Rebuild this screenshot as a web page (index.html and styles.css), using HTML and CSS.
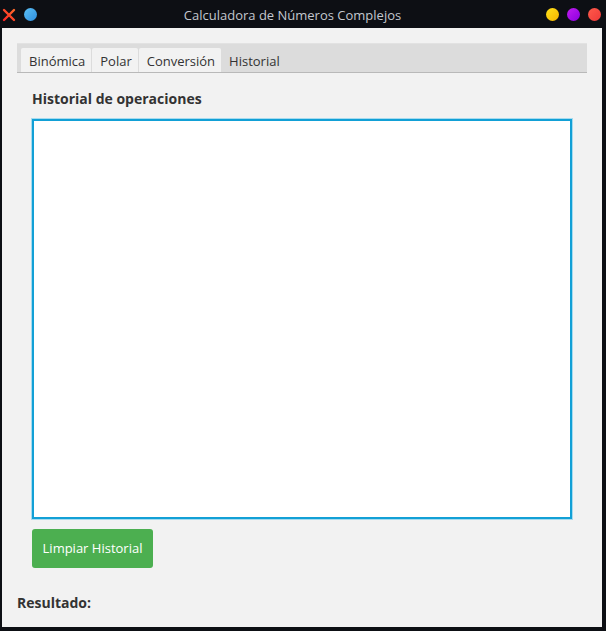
FILE: index.html
```html
<!DOCTYPE html>
<html lang="es">
<head>
<meta charset="utf-8">
<title>Calculadora de Números Complejos</title>
<link rel="stylesheet" href="styles.css">
</head>
<body>
<div class="window">
  <header class="titlebar">
    <div class="tb-left">
      <svg class="ico-x" width="14" height="14" viewBox="0 0 14 14">
        <defs><linearGradient id="gx" x1="0" y1="1" x2="1" y2="0"><stop offset="0" stop-color="#ff2626"/><stop offset="1" stop-color="#ff6a2a"/></linearGradient></defs>
        <path d="M2 2 L12 12 M12 2 L2 12" stroke="url(#gx)" stroke-width="2.4" stroke-linecap="round"/>
      </svg>
      <span class="dot dot-blue"></span>
    </div>
    <div class="title">Calculadora de Números Complejos</div>
    <div class="tb-right">
      <span class="dot dot-yellow"></span>
      <span class="dot dot-purple"></span>
      <span class="dot dot-red"></span>
    </div>
  </header>
  <main class="content">
    <nav class="tabbar">
      <span class="tab">Binómica</span>
      <span class="tab">Polar</span>
      <span class="tab">Conversión</span>
      <span class="tab tab-active">Historial</span>
    </nav>
    <section class="panel">
      <h2 class="heading">Historial de operaciones</h2>
      <div class="history"></div>
      <button class="btn">Limpiar Historial</button>
    </section>
    <div class="result">Resultado:</div>
  </main>
</div>
</body>
</html>
```
FILE: styles.css
```css
* { box-sizing: border-box; }
html, body { margin: 0; padding: 0; }
body {
  background: #0d0f14;
  font-family: "Open Sans", "Noto Sans", sans-serif;
  width: 606px;
  height: 631px;
  overflow: hidden;
}
.window { display: flex; flex-direction: column; height: 631px; }
.titlebar {
  height: 28px;
  display: flex;
  align-items: center;
  background: #0d0f14;
}
.tb-left { display: flex; align-items: center; padding-left: 2px; gap: 8px; }
.ico-x { display: block; margin-top: 1px; }
.dot { display: block; width: 13px; height: 13px; border-radius: 50%; }
.dot-blue { background: linear-gradient(135deg, #5bc0f5, #2f8fe0); }
.dot-yellow { background: linear-gradient(135deg, #ffe21a, #f5b400); }
.dot-purple { background: linear-gradient(135deg, #c21cf0, #8a00e0); }
.dot-red { background: linear-gradient(135deg, #ff5a4a, #ee3a3a); }
.title {
  flex: 1;
  text-align: center;
  color: #c3c7cf;
  font-size: 13px;
  padding-left: 2px;
  padding-top: 1px;
}
.tb-right { display: flex; align-items: center; gap: 8px; padding-right: 5px; margin-top: 1px; }
.content {
  margin: 0 4px 4px 2px;
  background: #f2f2f2;
  flex: 1;
  padding: 15px 15px 0 15px;
}
.tabbar {
  height: 30px;
  background: #dcdcdc;
  border-bottom: 1px solid #b9b9b9;
  border-top: 1px solid #e2e2e2;
  display: flex;
  align-items: flex-end;
  padding-left: 4px;
  gap: 1px;
}
.tab {
  height: 24px;
  padding: 1px 6px 0 8px;
  background: #f2f2f2;
  border-radius: 2px 2px 0 0;
  color: #333;
  font-size: 13px;
  line-height: 24px;
}
.tab-active { background: transparent; padding-left: 7px; }
.panel { padding: 16px 15px 0 15px; }
.heading {
  margin: 0;
  font-size: 14px;
  font-weight: 700;
  color: #333;
  line-height: 20px;
}
.history {
  margin-top: 10px;
  width: 540px;
  height: 400px;
  background: #fff;
  border: 2px solid #12a0d6;
  box-shadow: 0 0 0 1px #a6dbef;
}
.btn {
  display: block;
  margin-top: 10px;
  height: 39px;
  width: 121px;
  background: #4caf50;
  border: none;
  border-radius: 3px;
  color: #fff;
  font-family: "Open Sans", "Noto Sans", sans-serif;
  font-size: 13px;
  padding: 0 0 2px 0;
}
.result {
  margin-top: 25px;
  font-size: 14px;
  font-weight: 700;
  color: #333;
  line-height: 20px;
}
```
